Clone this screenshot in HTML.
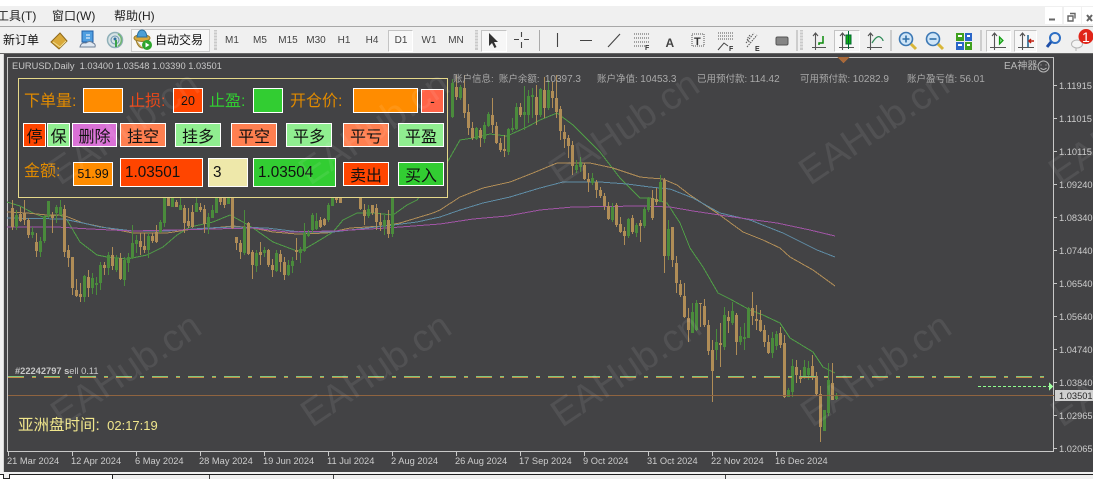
<!DOCTYPE html>
<html><head><meta charset="utf-8"><style>
html,body{margin:0;padding:0}
body{width:1093px;height:479px;overflow:hidden;position:relative;background:#f0f0f0;font-family:"Liberation Sans","Noto Sans CJK SC",sans-serif}
.a{position:absolute;white-space:nowrap}
.b{position:absolute;box-sizing:border-box;border:1px solid #fff;display:flex;align-items:center;justify-content:center;color:#111;font-size:16px;white-space:nowrap}
.l{position:absolute;font-size:16px;line-height:20px;white-space:nowrap}
.tf{position:absolute;top:35px;width:28px;text-align:center;font-size:10px;color:#444;line-height:12px}
.p{position:absolute;left:1059px;font-size:9.3px;color:#ccc;line-height:12px}
.d{position:absolute;top:455px;font-size:9.3px;color:#ccc;line-height:12px;white-space:nowrap}
.i{position:absolute;top:80px;font-size:9.5px;line-height:0;color:#a9a9a9;white-space:nowrap}
.tog{position:absolute;top:30px;height:22px;box-sizing:border-box;border:1px solid #c4c4c4;border-right-color:#fff;border-bottom-color:#fff;background:#f7f7f7}
</style></head><body>
<div class="a" style="left:0;top:0;width:1093px;height:6px;background:#fff"></div>
<div class="a" style="left:0;top:26px;width:1093px;height:1px;background:#a8a8a8"></div>
<div class="a" style="left:-3px;top:9px;font-size:12px;color:#222;line-height:14px">工具(T)</div>
<div class="a" style="left:52px;top:9px;font-size:12px;color:#222;line-height:14px">窗口(W)</div>
<div class="a" style="left:114px;top:9px;font-size:12px;color:#222;line-height:14px">帮助(H)</div>
<div class="a" style="left:1045px;top:7px;width:17px;height:17px;background:#fff"></div>
<div class="a" style="left:1064px;top:7px;width:17px;height:17px;background:#fff"></div>
<div class="a" style="left:1082px;top:7px;width:11px;height:17px;background:#fff"></div>
<svg class="a" style="left:1040px;top:5px" width="53" height="22" fill="none" stroke="#666"><path d="M9 14.500h6" stroke-width="2"/><path d="M30 8.500h5v5M28 11h5v5h-5z" stroke-width="1.400"/><path d="M47 10l5 6M52 10l-5 6" stroke-width="2"/></svg>
<div class="a" style="left:3px;top:32px;font-size:12px;color:#111;line-height:16px">新订单</div>
<div class="a" style="left:131px;top:29px;width:79px;height:23px;box-sizing:border-box;border:1px solid #ccc;background:#f7f7f7"></div>
<div class="a" style="left:155px;top:32px;font-size:12px;color:#111;line-height:16px">自动交易</div>
<div class="tf" style="left:218px">M1</div><div class="tf" style="left:246px">M5</div><div class="tf" style="left:274px">M15</div><div class="tf" style="left:302px">M30</div><div class="tf" style="left:330px">H1</div><div class="tf" style="left:358px">H4</div>
<div class="tog" style="left:388px;width:25px"></div>
<div class="tf" style="left:387px">D1</div><div class="tf" style="left:415px">W1</div><div class="tf" style="left:442px">MN</div>
<div class="tog" style="left:481px;width:26px"></div>
<div class="tog" style="left:834px;width:26px"></div>
<div class="tog" style="left:986px;width:25px"></div>
<div class="tog" style="left:1014px;width:23px"></div>
<svg class="a" style="left:0;top:27px" width="1093" height="27" fill="none">
<g fill="#c9c9c9"><rect x="214" y="3" width="3" height="20"/><rect x="475" y="3" width="3" height="20"/><rect x="800" y="3" width="3" height="20"/></g>
<g stroke="#f0f0f0"><path d="M214 5h3M214 8h3M214 11h3M214 14h3M214 17h3M214 20h3M475 5h3M475 8h3M475 11h3M475 14h3M475 17h3M475 20h3M800 5h3M800 8h3M800 11h3M800 14h3M800 17h3M800 20h3"/></g>
<path d="M51 15l9-9 7 8-8 8z" fill="#d9a93a" stroke="#8f6a1c"/><path d="M53 15l7 5 6-6" stroke="#f0dc90"/>
<rect x="82" y="4" width="11" height="11" fill="#4f9ee0" stroke="#1f5fa8"/><path d="M86 8h4M86 11h4" stroke="#fff"/><path d="M80 20q1-5 6-4 4-3 7 0 3 1 2 4z" fill="#dfe8f2" stroke="#6e7f96"/>
<circle cx="115" cy="13" r="7.500" fill="#d7e3e6" stroke="#8fb0b8" stroke-width="1.500"/><circle cx="115" cy="13" r="4" stroke="#6f97b0"/><circle cx="115" cy="12" r="1.500" fill="#2f6f9f"/><path d="M116 13v7" stroke="#3aa24b" stroke-width="2"/><path d="M118 7a7 7 0 0 1 0 12" stroke="#6fb56f" stroke-width="1.500"/>
<ellipse cx="142" cy="11" rx="8" ry="3.500" fill="#d8a93c" stroke="#9a7a28"/><path d="M137 10q1-7 5-7t5 7z" fill="#4b9fd6" stroke="#2a6f9e"/><path d="M136 13q2 8 7 8" stroke="#9a7a28" fill="#c9b26a"/><circle cx="147" cy="18" r="5" fill="#2ea52e"/><path d="M145.500 15.500l4 2.500-4 2.500z" fill="#fff"/>
<g stroke="#444" stroke-width="1.100"><path d="M514 12.500h5M524 12.500h5M521.500 5v5M521.500 15v6"/><path d="M557.500 6v14M580 13.500h12M608 20l12-13" /></g>
<path d="M489 6l0 13 3-3 2.500 5 2-1-2.500-5h4z" fill="#333"/>
<path d="M539.500 3v21M797 3v21M891 3v21M981 3v21" stroke="#aaa"/>
<path d="M634 7h15M634 11h15M634 15h15M634 19h11" stroke="#555" stroke-dasharray="1 1"/><text x="645" y="23" font-size="7" font-weight="bold" fill="#333" font-family="Liberation Sans">F</text>
<text x="665.500" y="20" font-size="12" font-weight="bold" fill="#444" font-family="Liberation Sans">A</text>
<rect x="692" y="7" width="12" height="12" stroke="#555" stroke-dasharray="1 1"/><text x="694" y="18" font-size="11" font-weight="bold" fill="#333" font-family="Liberation Sans">T</text>
<path d="M718 6h15M718 9h15M718 12h15" stroke="#555" stroke-dasharray="1 1"/><path d="M718 23l6-7 4 3" stroke="#444"/><text x="729" y="24" font-size="7" font-weight="bold" fill="#333" font-family="Liberation Sans">F</text>
<path d="M750 8l-3 4 3 4M746 16l8-10M747 20l10-12" stroke="#555" stroke-dasharray="1.500 1"/><text x="755" y="24" font-size="7" font-weight="bold" fill="#333" font-family="Liberation Sans">E</text>
<rect x="776" y="10" width="12" height="8" rx="1.500" fill="#858585" stroke="#555"/>
<g stroke="#555" stroke-width="1.100"><path d="M815.500 6v17M812 20.500h14M813 9l2.500-3 2.500 3M842.500 6v17M839 20.500h15M840 9l2.500-3 2.500 3M870.500 6v17M867 20.500h15M868 9l2.500-3 2.500 3M994.500 6v17M990 20.500h16M992 9l2.500-3 2.500 3M1022.500 6v17M1018 20.500h16M1020 9l2.500-3 2.500 3"/></g>
<path d="M823 9v7h-4v2" stroke="#0a8a0a" stroke-width="1.500"/>
<rect x="846" y="8" width="5" height="9" fill="#10b010" stroke="#063"/><path d="M848.500 4v18" stroke="#063"/>
<path d="M872 16q5-8 8-6t3 4" stroke="#2e8b57" stroke-width="1.300"/>
<circle cx="906" cy="12" r="6.500" fill="#cfe5f7" stroke="#3c78b4" stroke-width="1.600"/><path d="M902.500 12h7M906 8.500v7" stroke="#2f6fa8" stroke-width="1.600"/><path d="M911 17l5 5" stroke="#d9b73a" stroke-width="3"/>
<circle cx="933" cy="12" r="6.500" fill="#cfe5f7" stroke="#3c78b4" stroke-width="1.600"/><path d="M929.500 12h7" stroke="#2f6fa8" stroke-width="1.600"/><path d="M938 17l5 5" stroke="#d9b73a" stroke-width="3"/>
<rect x="956" y="6" width="8" height="8" fill="#3ea01e"/><rect x="965" y="6" width="7" height="8" fill="#2a66c8"/><rect x="956" y="15" width="8" height="8" fill="#2a66c8"/><rect x="965" y="15" width="7" height="8" fill="#3ea01e"/><path d="M958 9h4M967 9h3M958 18h4M967 18h3" stroke="#fff" stroke-width="2"/>
<path d="M999.500 10v7l3.500-3.500z" fill="#7fdc7f" stroke="#109a10" stroke-width="1.200"/>
<path d="M1028 8v12" stroke="#1a5f8c" stroke-width="1.500"/><path d="M1030 14h4M1031 12l-2 2 2 2" stroke="#c02010" stroke-width="1.500"/>
<circle cx="1055" cy="11" r="5" stroke="#2f6fc4" stroke-width="2"/><path d="M1051 15l-4 5" stroke="#1f4fa8" stroke-width="3"/>
<ellipse cx="1077" cy="17" rx="5.500" ry="4" fill="#f4f4f4" stroke="#b5b5b5"/><path d="M1076 21v3" stroke="#b5b5b5"/>
<circle cx="1086" cy="9.500" r="7.500" fill="#e02418"/>
<text x="1082" y="15" font-size="14" fill="#fff" font-family="Liberation Sans">1</text>
</svg>
<div class="a" style="left:0;top:53px;width:1093px;height:1px;background:#666"></div>

<div class="a" style="left:0;top:54px;width:1093px;height:418px;background:#434345"></div>
<div class="a" style="left:0;top:54px;width:3px;height:418px;background:#f0f0f0"></div>
<div class="a" style="left:3px;top:54px;width:1px;height:418px;background:#d5d5d5"></div>
<div class="a" style="left:7px;top:57px;width:1047px;height:395px;box-sizing:border-box;border:1px solid #c8c8c8"></div>
<svg class="a" style="left:0;top:0" width="1093" height="479" fill="none" shape-rendering="crispEdges">
<g stroke="#4f9e46"><polyline points="7,202 20,206 33,213 43,217 60,215 67,220 80,242 97,255 107,257 127,259 147,255 163,247 177,235 190,227 213,222 230,215 243,222 253,228 273,242 297,251 303,250 320,240 333,232 343,220 357,213 373,213 393,215 407,205 417,200 448,161 460,140 473,138 490,134 507,136 527,127 540,120 557,113 573,125 600,152 620,178 640,198 650,198 667,203 680,223 690,248 703,267 718,293 730,299 750,310 763,315 780,323 790,338 813,352 823,367 835,373"/></g>
<g stroke="#b08d57"><polyline points="7,212 27,213 47,215 63,215 83,223 107,228 133,233 167,233 193,229 213,228 233,226 253,228 273,232 297,234 327,233 350,228 383,226 400,223 433,213 440,210 460,197 483,188 510,182 533,173 557,163 590,163 613,168 640,177 650,178 663,179 677,185 690,195 717,213 743,232 763,240 780,248 790,257 813,270 835,286"/></g>
<g stroke="#5f8ca5"><polyline points="7,218 63,219 83,223 100,227 133,231 167,231 207,228 233,227 267,228 300,232 333,232 367,228 393,225 417,222 440,217 460,210 483,203 510,197 540,188 563,182 600,182 627,184 650,187 670,189 693,198 720,213 750,220 783,233 817,250 835,257"/></g>
<g stroke="#a055a5"><polyline points="7,227 57,227 90,229 133,231 173,230 213,229 253,228 287,232 333,231 387,228 440,224 473,219 507,216 540,210 573,207 640,206 670,207 693,211 733,217 777,223 810,230 835,236"/></g>
<g transform="translate(.5,0)">
<path stroke="#b08d57" d="M12 200V230M20 207V222M24 200V225M28 218V238M36 233V257M52 212V233M64 205V257M68 245V267M72 257V295M76 279V297M80 283V302M88 270V297M104 262V275M112 247V270M120 253V280M140 233V255M144 233V253M152 233V243M156 225V243M168 197V206M176 200V207M184 205V233M188 208V228M192 205V228M200 203V212M204 205V233M220 197V205M224 197V208M232 197V229M236 237V250M240 240V259M248 222V255M252 250V279M260 242V265M268 249V267M272 259V277M280 250V272M284 257V280M296 238V260M320 217V228M324 218V226M336 197V203M340 197V203M360 197V210M364 204V225M372 205V215M376 204V230M380 213V231M388 210V238M456 75V100M464 75V118M468 104V135M472 122V140M480 128V147M492 98V133M496 122V144M500 138V152M504 135V157M520 103V117M536 85V125M544 77V118M552 82V108M556 75V118M560 106V140M564 125V148M568 135V158M572 141V175M584 163V180M588 173V192M596 180V198M600 187V198M604 193V210M608 202V220M616 203V227M620 217V233M624 227V245M632 215V234M640 220V242M652 190V220M656 188V205M664 178V273M672 227V267M676 256V293M680 280V297M684 283V318M688 308V342M700 303V327M704 299V327M708 320V355M712 340V402M720 323V367M728 311V333M736 313V355M752 292V325M756 305V330M760 310V332M764 325V347M768 335V354M780 327V348M784 335V398M796 360V383M800 370V383M812 355V380M816 372V395M820 386V442M832 363V400"/>
<path stroke="#b08d57" stroke-width="3" d="M12 208V227M20 214V221M24 213V220M28 220V235M36 242V251M52 215V218M64 209V252M68 250V258M72 257V288M76 290V296M80 294V297M88 277V288M104 265V268M112 255V266M120 258V279M140 241V247M144 246V250M152 236V241M156 232V242M168 197V206M176 202V207M184 208V223M188 221V226M192 212V227M200 207V210M204 209V224M220 197V202M224 197V205M232 197V228M236 237V243M240 243V252M248 223V254M252 252V265M260 252V255M268 250V265M272 265V270M280 254V262M284 262V275M296 250V252M320 220V227M324 219V225M336 197V200M340 197V203M360 197V209M364 210V216M372 205V213M376 208V222M380 222V225M388 220V234M456 87V97M464 88V113M468 112V128M472 128V138M480 130V138M492 115V125M496 126V143M500 143V150M504 149V151M520 107V115M536 97V115M544 90V108M552 91V98M556 98V112M560 109V131M564 132V139M568 138V146M572 145V166M584 165V179M588 179V182M596 182V190M600 190V196M604 196V206M608 206V219M616 205V225M620 224V232M624 231V236M632 218V232M640 223V226M652 198V218M656 199V202M664 180V256M672 227V260M676 263V283M680 284V295M684 296V317M688 318V330M700 303V304M704 306V325M708 325V351M712 350V371M720 343V345M728 317V321M736 315V342M752 308V316M756 319V321M760 320V331M764 330V342M768 342V353M780 333V345M784 343V397M796 367V375M800 376V379M812 366V376M816 376V394M820 394V427M832 383V400"/>
<path stroke="#4a8b3c" d="M16 210V230M32 227V238M40 237V257M44 215V243M48 201V218M56 205V223M60 200V215M84 275V302M92 273V294M96 277V295M100 262V290M108 252V275M116 255V272M124 257V286M128 253V272M132 225V259M136 235V253M148 233V258M160 220V233M164 197V227M172 197V207M180 197V210M196 197V212M208 213V234M212 205V218M216 197V213M228 197V204M244 210V255M256 250V272M264 247V257M276 250V272M288 260V276M292 257V273M300 247V263M304 223V252M308 230V237M312 213V233M316 213V230M328 203V222M332 197V206M368 205V218M384 215V235M392 197V237M452 79V118M460 85V100M476 127V140M484 122V143M488 112V127M508 128V155M512 118V132M516 103V130M524 86V130M528 90V123M532 88V118M540 88V117M548 80V110M576 160V173M580 157V172M592 173V185M612 203V222M628 218V238M636 223V237M644 207V228M648 197V212M660 175V200M668 220V260M692 303V333M696 300V331M716 329V360M724 307V350M732 302V325M740 327V345M744 323V350M748 307V338M772 332V358M776 331V350M788 388V397M792 359V397M804 360V379M808 361V380M824 410V431M828 363V416M836 393V400"/>
<path stroke="#4a8b3c" stroke-width="3" d="M16 215V227M32 232V235M40 241V252M44 217V241M48 201V215M56 207V213M60 207V215M84 276V297M92 278V288M96 283V285M100 265V283M108 255V268M116 258V270M124 260V280M128 257V263M132 243V258M136 240V244M148 236V250M160 222V232M164 197V223M172 197V207M180 205V210M196 203V212M208 217V227M212 210V218M216 197V213M228 197V204M244 227V253M256 253V266M264 250V253M276 253V271M288 265V275M292 261V266M300 249V253M304 233V251M308 233V236M312 215V230M316 221V229M328 205V220M332 197V206M368 209V216M384 220V226M392 197V234M452 83V117M460 87V98M476 128V139M484 125V139M488 114V126M508 129V152M512 128V130M516 107V129M524 112V115M528 96V115M532 95V97M540 89V115M548 90V108M576 165V170M580 162V167M592 178V183M612 207V220M628 219V236M636 225V233M644 209V226M648 198V210M660 182V202M668 229V256M692 312V333M696 303V330M716 342V350M724 315V347M732 311V323M740 336V342M744 337V339M748 308V338M772 338V353M776 334V346M788 390V397M792 366V392M804 367V378M808 368V375M824 410V431M828 380V413M836 395V399"/>
</g>
<path d="M8 395.500H1054" stroke="#8f6440"/>
<path d="M8 376.500H1052" stroke="#7fc77f" stroke-width="1" stroke-dasharray="16 8 4 8"/>
<path d="M8 377.500H1052" stroke="#c98a45" stroke-width="1" stroke-dasharray="16 8 4 8"/>
<path d="M978 386.500H1049" stroke="#8fff8f" stroke-dasharray="3 2"/>
<path d="M1049 382v9l4-4.500z" fill="#9fff9f"/>
<path d="M837 57h13l-6.500 6z" fill="#a8693a"/>
<path d="M1054 85.500h3M1054 118.500h3M1054 151.500h3M1054 184.500h3M1054 217.500h3M1054 250.500h3M1054 283.500h3M1054 316.500h3M1054 349.500h3M1054 382.500h3M1054 415.500h3M1054 448.500h3" stroke="#c8c8c8"/>
<path d="M8.500 452v4M72.500 452v4M136.500 452v4M200.500 452v4M264.500 452v4M328.500 452v4M392.500 452v4M456.500 452v4M520.500 452v4M584.500 452v4M648.500 452v4M712.500 452v4M776.500 452v4" stroke="#c8c8c8"/>
</svg>

<div class="a" style="left:18px;top:78px;width:430px;height:120px;box-sizing:border-box;border:1px solid #e6d98a;background:#434345"></div>
<div class="l" style="left:24px;top:92px;color:#e08a00">下单量:</div>
<div class="b" style="left:83px;top:88px;width:40px;height:25px;background:#ff8c00"></div>
<div class="l" style="left:129px;top:92px;color:#e8481a">止损:</div>
<div class="b" style="left:173px;top:88px;width:30px;height:25px;background:#ff4500;font-size:12.500px">20</div>
<div class="l" style="left:209px;top:92px;color:#32cd32">止盈:</div>
<div class="b" style="left:253px;top:88px;width:30px;height:25px;background:#32cd32"></div>
<div class="l" style="left:290px;top:92px;color:#e08a00">开仓价:</div>
<div class="b" style="left:353px;top:88px;width:65px;height:25px;background:#ff8c00"></div>
<div class="b" style="left:421px;top:89px;width:23px;height:24px;background:#ff6347;font-size:14px">-</div>
<div class="b" style="left:23px;top:123px;width:23px;height:24px;background:#ff4500">停</div>
<div class="b" style="left:47px;top:123px;width:23px;height:24px;background:#90ee90">保</div>
<div class="b" style="left:72px;top:123px;width:45px;height:24px;background:#da70d6">删除</div>
<div class="b" style="left:120px;top:123px;width:46px;height:24px;background:#ff7f50">挂空</div>
<div class="b" style="left:175px;top:123px;width:46px;height:24px;background:#90ee90">挂多</div>
<div class="b" style="left:231px;top:123px;width:46px;height:24px;background:#ff7f50">平空</div>
<div class="b" style="left:286px;top:123px;width:46px;height:24px;background:#90ee90">平多</div>
<div class="b" style="left:343px;top:123px;width:46px;height:24px;background:#ff7f50">平亏</div>
<div class="b" style="left:398px;top:123px;width:46px;height:24px;background:#90ee90">平盈</div>
<div class="l" style="left:24px;top:162px;color:#e08a00">金额:</div>
<div class="b" style="left:73px;top:162px;width:40px;height:24px;background:#ff8c00;font-size:12.500px">51.99</div>
<div class="b" style="left:120px;top:158px;width:83px;height:29px;background:#ff4500;font-size:15.300px;justify-content:flex-start;padding-left:4px">1.03501</div>
<div class="b" style="left:208px;top:158px;width:40px;height:29px;background:#eee8aa;font-size:15.300px;justify-content:flex-start;padding-left:4px">3</div>
<div class="b" style="left:253px;top:158px;width:83px;height:29px;background:#32cd32;font-size:15.300px;justify-content:flex-start;padding-left:4px">1.03504</div>
<div class="b" style="left:343px;top:162px;width:46px;height:24px;background:#ff4500">卖出</div>
<div class="b" style="left:398px;top:162px;width:46px;height:24px;background:#32cd32">买入</div>

<div class="a" style="left:12px;top:60px;font-size:9.300px;color:#c8c8c8;line-height:12px">EURUSD,Daily&nbsp; 1.03400 1.03548 1.03390 1.03501</div>
<div class="i" style="left:453px">账户信息: &nbsp;账户余额: &nbsp;<span style="font-size:10px">10397.3</span></div>
<div class="i" style="left:597px">账户净值: <span style="font-size:10px">10453.3</span></div>
<div class="i" style="left:697px">已用预付款: <span style="font-size:10px">114.42</span></div>
<div class="i" style="left:800px">可用预付款: <span style="font-size:10px">10282.9</span></div>
<div class="i" style="left:907px">账户盈亏值: <span style="font-size:10px">56.01</span></div>
<div class="a" style="left:1004px;top:60px;font-size:10px;color:#b8b8b8;line-height:13px">EA神器</div>
<svg class="a" style="left:1037px;top:60px" width="13" height="13" fill="none" stroke="#b8b8b8"><circle cx="6.500" cy="6.500" r="5.500"/><path d="M4 4.500v1M9 4.500v1"/><path d="M3.500 8q3 3 6 0"/></svg>
<div class="a" style="left:15px;top:365px;font-size:9.300px;color:#c8c8c8;line-height:12px"><b>#22242797 s</b>ell 0.11</div>
<div class="a" style="left:18px;top:416px;font-size:15.500px;color:#f0e68c;line-height:20px">亚洲盘时间: <span style="font-size:13px;margin-left:3px">02:17:19</span></div>

<div class="p" style="top:80px">1.11915</div><div class="p" style="top:113px">1.11015</div><div class="p" style="top:146px">1.10115</div><div class="p" style="top:179px">1.09240</div><div class="p" style="top:212px">1.08340</div><div class="p" style="top:245px">1.07440</div><div class="p" style="top:278px">1.06540</div><div class="p" style="top:311px">1.05640</div><div class="p" style="top:344px">1.04740</div><div class="p" style="top:377px">1.03840</div><div class="p" style="top:410px">1.02965</div><div class="p" style="top:443px">1.02065</div>
<div class="a" style="left:1055px;top:390px;width:38px;height:11px;background:#cfcfcf"></div>
<div class="p" style="top:390px;color:#222">1.03501</div>
<div class="d" style="left:7px">21 Mar 2024</div><div class="d" style="left:71px">12 Apr 2024</div><div class="d" style="left:135px">6 May 2024</div><div class="d" style="left:199px">28 May 2024</div><div class="d" style="left:263px">19 Jun 2024</div><div class="d" style="left:327px">11 Jul 2024</div><div class="d" style="left:391px">2 Aug 2024</div><div class="d" style="left:455px">26 Aug 2024</div><div class="d" style="left:519px">17 Sep 2024</div><div class="d" style="left:583px">9 Oct 2024</div><div class="d" style="left:647px">31 Oct 2024</div><div class="d" style="left:711px">22 Nov 2024</div><div class="d" style="left:775px">16 Dec 2024</div>

<svg class="a" style="left:0;top:0" width="1093" height="472" font-family="Liberation Sans" font-size="38" fill="#fff" fill-opacity=".08">
<text transform="translate(60,186) rotate(-34)">EAHub.cn</text><text transform="translate(310,186) rotate(-34)">EAHub.cn</text><text transform="translate(560,186) rotate(-34)">EAHub.cn</text><text transform="translate(810,186) rotate(-34)">EAHub.cn</text><text transform="translate(1060,186) rotate(-34)">EAHub.cn</text>
<text transform="translate(62,428) rotate(-34)">EAHub.cn</text><text transform="translate(312,428) rotate(-34)">EAHub.cn</text><text transform="translate(562,428) rotate(-34)">EAHub.cn</text><text transform="translate(812,428) rotate(-34)">EAHub.cn</text><text transform="translate(1062,428) rotate(-34)">EAHub.cn</text>
</svg>

<div class="a" style="left:0;top:472px;width:1093px;height:2px;background:#f0f0f0"></div>
<div class="a" style="left:0;top:474px;width:1093px;height:1px;background:#222"></div>
<div class="a" style="left:0;top:475px;width:112px;height:4px;background:#fff"></div>
<div class="a" style="left:3px;top:474px;width:7px;height:5px;box-sizing:border-box;border:1px solid #222;border-top:0;background:#f0f0f0"></div>
<div class="a" style="left:112px;top:475px;width:1px;height:4px;background:#222"></div>
<div class="a" style="left:209px;top:475px;width:1px;height:4px;background:#444"></div>
<div class="a" style="left:333px;top:475px;width:1px;height:4px;background:#444"></div>
<div class="a" style="left:725px;top:475px;width:1px;height:4px;background:#444"></div>
</body></html>
